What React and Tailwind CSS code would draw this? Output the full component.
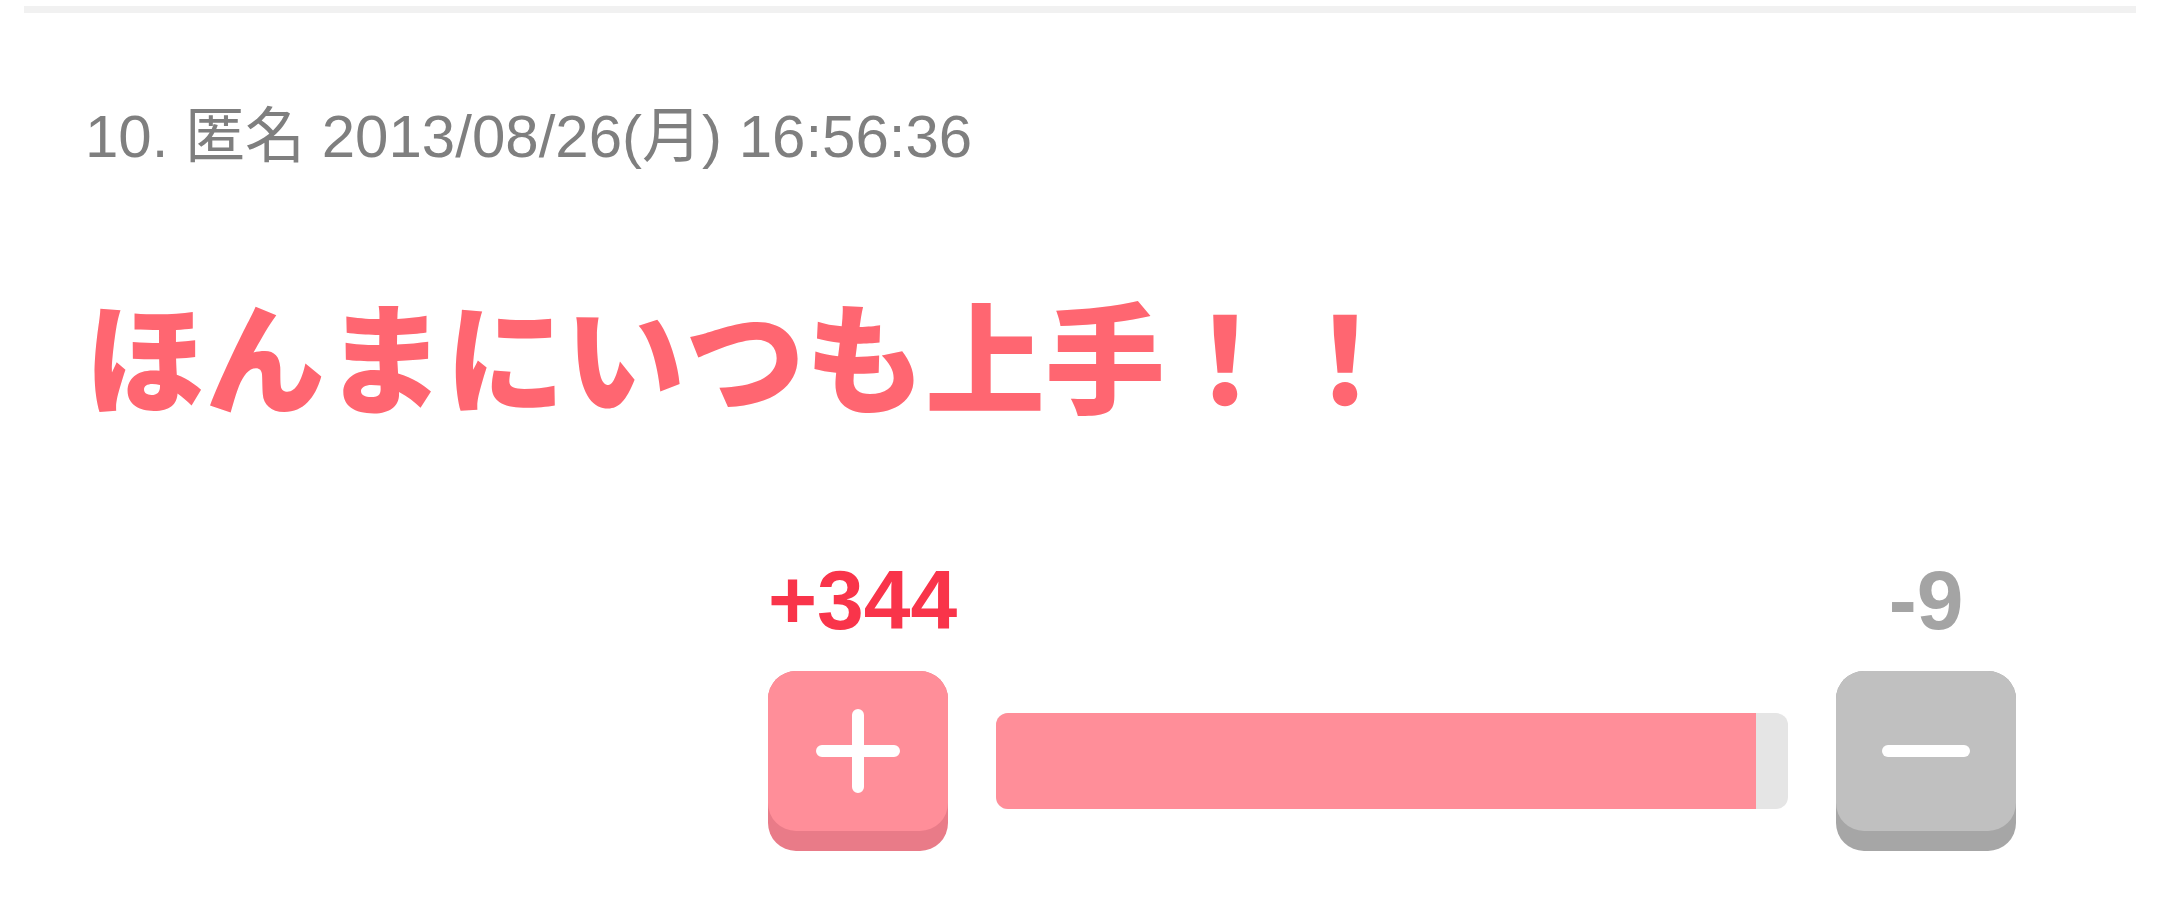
export default function App() {
  const up = 344;
  const down = 9;

  return (
    <div className="w-[2160px] h-[904px] bg-white overflow-hidden" style={{ fontFamily: '"Liberation Sans", "Noto Sans CJK JP", sans-serif' }}>
      <div className="mx-[24px] mt-[6px] h-[7px] bg-[#f1f1f1]" />

      <div className="pl-[85px]">
        <p className="mt-[94px] text-[60px] leading-none text-[#7f7f7f]">
          10. 匿名 2013/08/26(月) 16:56:36
        </p>
        <h1
          className="mt-[126px] text-[120px] font-black leading-none text-[#ff6671]"
          style={{ fontFamily: '"Noto Sans CJK JP", sans-serif' }}
        >
          ほんまにいつも上手！！
        </h1>
      </div>

      <div className="flex justify-end pr-[144px] mt-[145px]">
        <div className="grid grid-cols-[180px_792px_180px] gap-x-[48px] gap-y-[29px]">
          <div className="text-center text-[84px] font-bold leading-none text-[#f9344a]">+{up}</div>
          <div />
          <div className="text-center text-[84px] font-bold leading-none text-[#a4a4a4]">-{down}</div>

          {/* plus button */}
          <div className="h-[180px] w-[180px] rounded-[28px] bg-[#e97b88]">
            <div className="flex h-[160px] items-center justify-center rounded-[28px] bg-[#ff8e99]">
              <svg width="84" height="84" viewBox="0 0 84 84">
                <path d="M42 6v72M6 42h72" stroke="white" strokeWidth="12" strokeLinecap="round" />
              </svg>
            </div>
          </div>

          <div className="self-center h-[96px] overflow-hidden rounded-[12px] bg-[#e5e5e5]">
            <div className="h-full w-[96%] bg-[#ff8e99]" />
          </div>

          {/* minus button */}
          <div className="h-[180px] w-[180px] rounded-[28px] bg-[#a6a6a6]">
            <div className="flex h-[160px] items-center justify-center rounded-[28px] bg-[#c0c0c0]">
              <svg width="88" height="20" viewBox="0 0 88 20">
                <path d="M6 10h76" stroke="white" strokeWidth="12" strokeLinecap="round" />
              </svg>
            </div>
          </div>
        </div>
      </div>
    </div>
  );
}
